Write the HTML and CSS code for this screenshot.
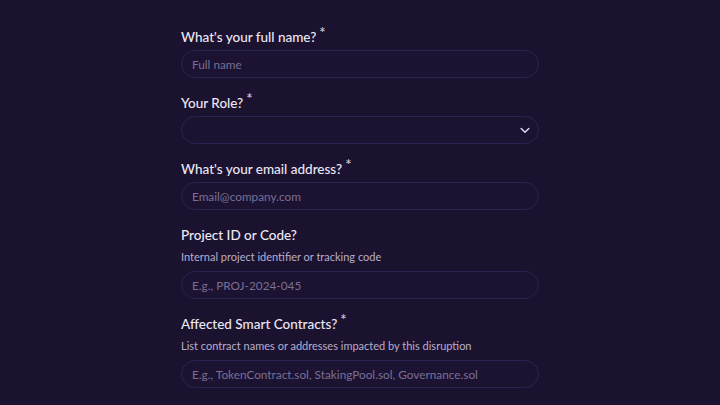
FILE: index.html
```html
<!DOCTYPE html>
<html lang="en">
<head>
    <meta charset="UTF-8">
    <meta name="viewport" content="width=device-width, initial-scale=1.0">
    <title>Incident report</title>
    <link rel="stylesheet" href="styles.css">
</head>
<body>
    <form class="urlap">
        <div class="mezo">
            <label for="teljes-nev">What's your full name?<span class="csillag">*</span></label>
            <input type="text" id="teljes-nev" placeholder="Full name">
        </div>

        <div class="mezo">
            <label for="szerep">Your Role?<span class="csillag">*</span></label>
            <div class="valaszto">
                <select id="szerep">
                    <option value=""></option>
                </select>
                <svg class="nyil" width="10" height="7" viewBox="0 0 10 7" fill="none">
                    <path d="M1.2 1.5L5 5.2L8.8 1.5" stroke="#d9d2e8" stroke-width="1.6" stroke-linecap="round" stroke-linejoin="round"/>
                </svg>
            </div>
        </div>

        <div class="mezo">
            <label for="email">What's your email address?<span class="csillag">*</span></label>
            <input type="email" id="email" placeholder="Email@company.com">
        </div>

        <div class="mezo">
            <label for="projekt">Project ID or Code?</label>
            <p class="sugo">Internal project identifier or tracking code</p>
            <input type="text" id="projekt" placeholder="E.g., PROJ-2024-045">
        </div>

        <div class="mezo">
            <label for="szerzodesek">Affected Smart Contracts?<span class="csillag">*</span></label>
            <p class="sugo">List contract names or addresses impacted by this disruption</p>
            <input type="text" id="szerzodesek" placeholder="E.g., TokenContract.sol, StakingPool.sol, Governance.sol">
        </div>
    </form>
</body>
</html>
```

FILE: styles.css
```css
* {
    box-sizing: border-box;
    margin: 0;
    padding: 0;
}

body {
    background-color: #1b1230;
    font-family: "Lato", "Noto Sans", sans-serif;
    color: #ece8f4;
    overflow: hidden;
}

.urlap {
    width: 358px;
    margin: 0 auto;
    padding-top: 28px;
}

.mezo {
    display: flex;
    flex-direction: column;
    margin-bottom: 16px;
}

.mezo label {
    height: 18px;
    font-size: 13.5px;
    line-height: 18px;
    font-weight: 500;
    margin-bottom: 4px;
}

.csillag {
    color: #d0c9dd;
    font-size: 15px;
    line-height: 0;
    margin-left: 3px;
    position: relative;
    top: -4px;
}

.sugo {
    height: 16px;
    font-size: 11px;
    line-height: 16px;
    color: #b7aecb;
    margin-top: 1px;
    margin-bottom: 6px;
}

input, select {
    flex-shrink: 0;
    width: 100%;
    height: 28px;
    border: 1px solid #2c2350;
    border-radius: 14px;
    background-color: #1c1332;
    padding: 0 10px;
    font-family: inherit;
    font-size: 11.8px;
    color: #ece8f4;
    outline: none;
}

input::placeholder {
    color: #7a6f94;
}

.valaszto {
    position: relative;
}

select {
    appearance: none;
    -webkit-appearance: none;
}

.nyil {
    position: absolute;
    right: 9px;
    top: 11px;
    pointer-events: none;
}
```
